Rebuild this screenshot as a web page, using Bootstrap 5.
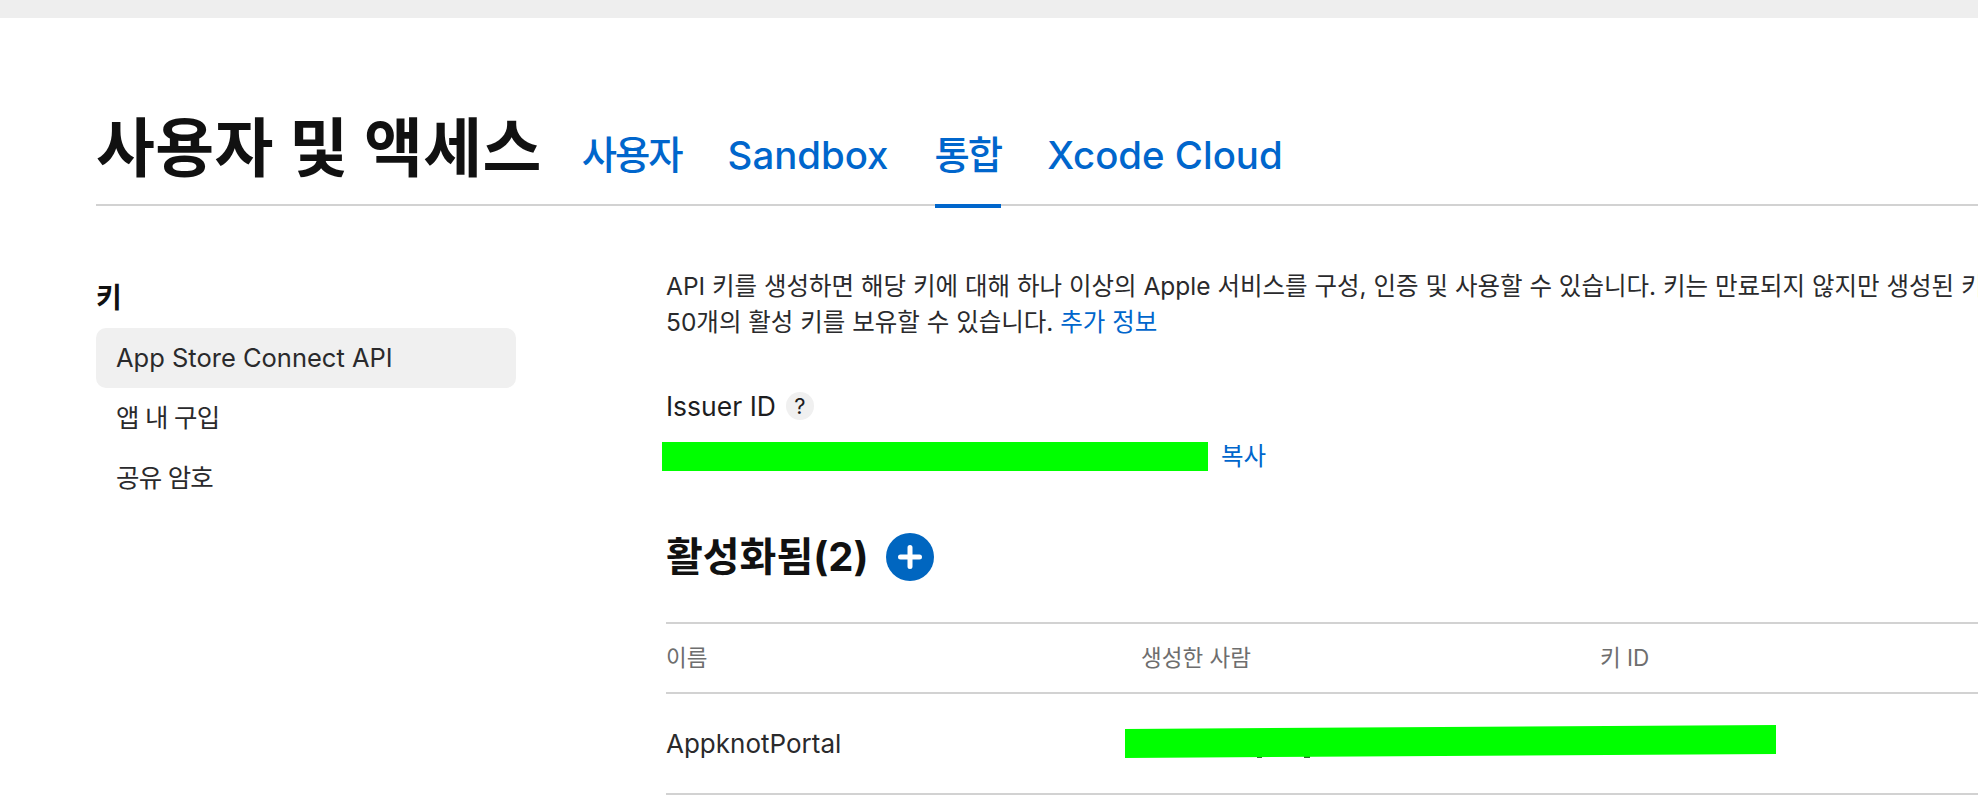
<!DOCTYPE html>
<html lang="ko">
<head>
    <meta charset="UTF-8">
    <meta name="viewport" content="width=device-width, initial-scale=1.0">
    <title>사용자 및 액세스</title>
    <link href="https://cdn.jsdelivr.net/npm/bootstrap@5.3.2/dist/css/bootstrap.min.css" rel="stylesheet">
    <script src="https://cdn.jsdelivr.net/npm/bootstrap@5.3.2/dist/js/bootstrap.bundle.min.js"></script>
    <style>
        html, body { height: 800px; overflow: hidden; }
        body { font-family: Inter, "Noto Sans CJK KR", sans-serif; color: #1d1d1f; background: #fff; }
        a { color: #0066cc; text-decoration: none; }
        .top-strip { height: 18px; background: #eeeeee; }
        .page-wrap { padding: 0 0 0 96px; }
        .page-head { height: 135px; margin-top: 53px; border-bottom: 2px solid #d2d2d2; gap: 40px; }
        .page-title { font-size: 64px; font-weight: 700; line-height: 96px; margin: 29px 0 0; color: #111; letter-spacing: .35px; }
        .tab-links { gap: 46px; }
        .tab-links a { font-size: 38.4px; font-weight: 500; line-height: 48px; height: 137px; padding-top: 60px; display: block; }
        .tab-links a.ko-tab { letter-spacing: -2px; }
        .tab-links a.on { border-bottom: 4px solid #0066cc; }
        .side-col { width: 420px; margin-right: 146px; flex: none; padding-top: 68px; }
        .side-title { font-size: 28px; font-weight: 600; line-height: 48px; margin: 0 0 6px; color: #111; }
        .side-item { display: block; height: 60px; line-height: 60px; padding-left: 20px; font-size: 25.5px; color: #2a2a2c; border-radius: 10px; }
        .side-item.ko-item { letter-spacing: -.8px; }
        .side-item.on { background: #f0f0f0; }
        .main-col { flex: 1; min-width: 0; overflow: hidden; padding: 62px 0 0 4px; }
        .intro { font-size: 24.5px; line-height: 36px; white-space: nowrap; margin: 0; color: #2a2a2c; }
        .issuer-row { margin-top: 51px; height: 30px; font-size: 26.5px; font-weight: 400; line-height: 30px; gap: 10px; }
        .help-dot { width: 28px; height: 28px; border-radius: 50%; background: #f0f0f0; font-size: 22px; line-height: 28px; text-align: center; }
        .issuer-val { margin-top: 21px; margin-left: -4px; gap: 13px; height: 29px; font-size: 24.5px; line-height: 29px; }
        .redact-box { width: 546px; height: 29px; background: #00ff00; }
        .section-row { margin-top: 62px; height: 48px; gap: 17px; }
        .section-title { font-size: 40px; font-weight: 700; line-height: 48px; margin: 0; color: #111; }
        .add-btn { width: 48px; height: 48px; border: 0; padding: 0; border-radius: 50%; background: #0066c0; display: block; }
        .add-btn svg { display: block; }
        .keys-table { margin: 41px 0 0; width: 1312px; table-layout: fixed; border-top: 2px solid #d2d2d2; }
        .keys-table th, .keys-table td { padding: 0; border-bottom: 2px solid #d2d2d2; vertical-align: middle; color: inherit; }
        .keys-table th { height: 70px; font-size: 22.5px; font-weight: 400; color: #6e6e6e; }
        .keys-table td { height: 101px; font-size: 26px; color: #2a2a2c; }
        .row-redact { display: block; margin: -4px 0 0 -16px; }
    </style>
</head>
<body>

<div class="top-strip"></div>

<div class="page-wrap">
    <div class="page-head d-flex align-items-start">
        <h1 class="page-title">사용자 및 액세스</h1>
        <nav class="tab-links d-flex">
            <a href="#" class="ko-tab">사용자</a>
            <a href="#">Sandbox</a>
            <a href="#" class="ko-tab on">통합</a>
            <a href="#">Xcode Cloud</a>
        </nav>
    </div>

    <div class="d-flex">
        <div class="side-col">
            <h2 class="side-title">키</h2>
            <a href="#" class="side-item on">App Store Connect API</a>
            <a href="#" class="side-item ko-item">앱 내 구입</a>
            <a href="#" class="side-item ko-item">공유 암호</a>
        </div>

        <div class="main-col">
            <p class="intro">API 키를 생성하면 해당 키에 대해 하나 이상의 Apple 서비스를 구성, 인증 및 사용할 수 있습니다. 키는 만료되지 않지만 생성된 키<br>50개의 활성 키를 보유할 수 있습니다. <a href="#">추가 정보</a></p>

            <div class="issuer-row d-flex align-items-center">
                <span>Issuer ID</span>
                <span class="help-dot">?</span>
            </div>
            <div class="issuer-val d-flex">
                <div class="redact-box"></div>
                <a href="#">복사</a>
            </div>

            <div class="section-row d-flex align-items-center">
                <h2 class="section-title">활성화됨(2)</h2>
                <button class="add-btn" type="button" aria-label="추가">
                    <svg width="48" height="48" viewBox="0 0 48 48"><path d="M24 14.5v19M14.500 24h19" stroke="#fff" stroke-width="5" stroke-linecap="round"/></svg>
                </button>
            </div>

            <table class="table keys-table">
                <colgroup>
                    <col style="width: 475px">
                    <col style="width: 459px">
                    <col>
                </colgroup>
                <thead>
                    <tr><th>이름</th><th>생성한 사람</th><th>키 ID</th></tr>
                </thead>
                <tbody>
                    <tr>
                        <td>AppknotPortal</td>
                        <td colspan="2">
                            <svg class="row-redact" width="652" height="34" viewBox="0 0 652 34"><rect x="132" y="31" width="5" height="2" fill="#2d6b2d"/><rect x="179" y="31" width="6" height="2" fill="#2d6b2d"/><polygon points="0,4 651,0 651,29 0,33" fill="#00ff00"/></svg>
                        </td>
                    </tr>
                </tbody>
            </table>
        </div>
    </div>
</div>

</body>
</html>
